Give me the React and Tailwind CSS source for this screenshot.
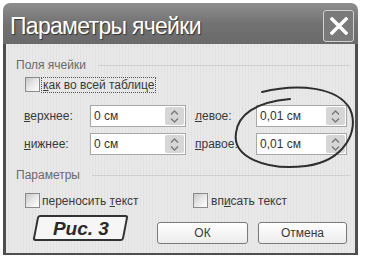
import React from "react";

const font = { fontFamily: '"Liberation Sans", Arial, sans-serif' };

function Checkbox() {
  return (
    <span className="block w-[15px] h-[15px] border border-[#8a8a8a] bg-gradient-to-br from-[#c8c8c8] via-[#e8e8e8] to-white shrink-0" />
  );
}

function Spinner() {
  return (
    <div className="w-[19px] h-full bg-[#d6d6d6] rounded-[2px] flex flex-col items-center justify-center gap-[3px]">
      <svg width="9" height="5" viewBox="0 0 9 5">
        <path d="M1 4.5 L4.5 1 L8 4.5" fill="none" stroke="#7a7a7a" strokeWidth="1.4" />
      </svg>
      <svg width="9" height="5" viewBox="0 0 9 5">
        <path d="M1 0.5 L4.5 4 L8 0.5" fill="none" stroke="#7a7a7a" strokeWidth="1.4" />
      </svg>
    </div>
  );
}

function Field({ value, width }) {
  return (
    <div
      className={`h-[22px] border border-[#a8a8a8] bg-white flex items-center justify-between pl-[3px] pr-[1px] py-[1px] ${width}`}
    >
      <span className="text-[12px] text-[#333]">{value}</span>
      <Spinner />
    </div>
  );
}

function Label({ pre, key_, post, width }) {
  return (
    <span className={`text-[12px] text-[#3a3a3a] ${width}`}>
      {pre}
      <span className="underline">{key_}</span>
      {post}
    </span>
  );
}

function GroupTitle({ children }) {
  return (
    <div className="flex items-center h-[14px] pl-[10px] mr-[5px]">
      <span className="text-[12px] text-[#6a6a6a]">{children}</span>
      <span className="flex-1 h-px bg-[#cfcfcf] ml-[12px]" />
    </div>
  );
}

export default function App() {
  return (
    <div className="w-[365px] h-[259px] bg-white pt-[3px] pl-[3px] relative" style={font}>
      <div className="w-[355px] h-[252px] flex flex-col">
        {/* Title bar */}
        <div className="h-[41px] rounded-t-[7px] bg-gradient-to-b from-[#8e8e8e] via-[#727272] to-[#6a6a6a] flex items-center justify-between pl-[7px] pr-[4px] shrink-0">
          <span className="mt-[5px] text-[23px] text-white leading-none [text-shadow:1px_1px_1px_#333] tracking-[-0.7px]">
            Параметры ячейки
          </span>
          <div className="w-[31px] h-[32px] mt-[4px] rounded-[3px] border border-[#d0d0d0] bg-[#7a7a7a] flex items-center justify-center">
            <svg width="18" height="18" viewBox="0 0 18 18">
              <path d="M2 2 L16 16 M16 2 L2 16" stroke="white" strokeWidth="3.4" strokeLinecap="square" />
            </svg>
          </div>
        </div>

        {/* Body */}
        <div className="flex-1 border-x-[3px] border-b-[2px] border-[#4e4e4e] bg-[repeating-linear-gradient(90deg,#e9e9e9_0px,#e9e9e9_2px,#e1e1e1_2px,#e1e1e1_3px)] flex flex-col">
          <div className="mt-[14px]">
            <GroupTitle>Поля ячейки</GroupTitle>
          </div>

          <div className="mt-[5px] flex items-center pl-[19px] h-[15px]">
            <Checkbox />
            <span className="ml-[1px] border border-dotted border-[#555] text-[12px] text-[#3a3a3a] px-[1px] leading-[14px]">
              <span className="underline">к</span>ак во всей таблице
            </span>
          </div>

          <div className="mt-[13px] flex items-center pl-[18px]">
            <Label pre="" key_="в" post="ерхнее:" width="w-[66px]" />
            <Field value="0 см" width="w-[96px]" />
            <span className="ml-[9px]" />
            <Label pre="" key_="л" post="евое:" width="w-[61px]" />
            <Field value="0,01 см" width="w-[91px]" />
          </div>

          <div className="mt-[6px] flex items-center pl-[18px]">
            <Label pre="" key_="н" post="ижнее:" width="w-[66px]" />
            <Field value="0 см" width="w-[96px]" />
            <span className="ml-[9px]" />
            <Label pre="" key_="п" post="равое:" width="w-[61px]" />
            <Field value="0,01 см" width="w-[91px]" />
          </div>

          <div className="mt-[13px]">
            <GroupTitle>Параметры</GroupTitle>
          </div>

          <div className="mt-[11px] flex items-center pl-[19px] h-[15px]">
            <Checkbox />
            <span className="ml-[2px] w-[151px] text-[12px] text-[#3a3a3a]">
              переносить <span className="underline">т</span>екст
            </span>
            <Checkbox />
            <span className="ml-[3px] text-[12px] text-[#3a3a3a]">
              вп<span className="underline">и</span>сать текст
            </span>
          </div>

          <div className="mt-[5px] flex items-start">
            <div className="ml-[29px] mt-[2px] w-[91px] h-[26px] -skew-x-[11deg] border-2 border-[#333] rounded-[3px] bg-[#f6f6f6] flex items-center justify-center">
              <span className="skew-x-[11deg] text-[19px] font-bold italic text-[#2a2a2a] leading-none">
                Рис. 3
              </span>
            </div>
            <div className="ml-auto mr-[8px] mt-[9px] flex gap-[10px]">
              <button className="w-[91px] h-[22px] rounded-[3px] border border-[#7a7a7a] bg-gradient-to-b from-white to-[#ececec] text-[12px] text-[#3a3a3a]">
                ОК
              </button>
              <button className="w-[89px] h-[22px] rounded-[3px] border border-[#7a7a7a] bg-gradient-to-b from-white to-[#ececec] text-[12px] text-[#3a3a3a]">
                Отмена
              </button>
            </div>
          </div>
        </div>
      </div>

      {/* Hand-drawn circle over the right fields */}
      <svg className="absolute left-0 top-0 pointer-events-none" width="365" height="259" viewBox="0 0 365 259">
        <path
          d="M262 92 C298 83 338 87 350 109 C360 131 344 161 306 166 C266 171 232 157 236 133 C238 115 255 102 290 99"
          fill="none"
          stroke="#2e2e2e"
          strokeWidth="2"
          strokeLinecap="round"
        />
      </svg>
    </div>
  );
}
